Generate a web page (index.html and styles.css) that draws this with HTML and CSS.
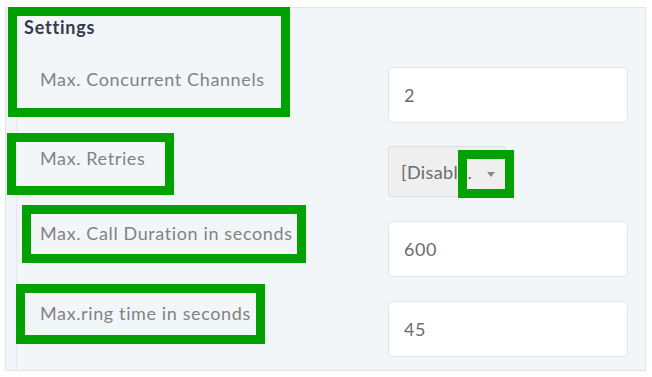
FILE: index.html
```html
<!DOCTYPE html>
<html>
<head>
<meta charset="utf-8">
<link rel="stylesheet" href="styles.css">
</head>
<body>
<div class="panel">
  <div class="section">
    <div class="heading">Settings</div>
    <div class="form">
      <div class="row r1">
        <label class="label">Max. Concurrent Channels</label>
        <div class="input">2</div>
      </div>
      <div class="row r2">
        <label class="label">Max. Retries</label>
        <div class="select"><span class="select-text">[Disabled]</span><span class="caret"></span></div>
      </div>
      <div class="row r3">
        <label class="label">Max. Call Duration in seconds</label>
        <div class="input">600</div>
      </div>
      <div class="row r4">
        <label class="label">Max.ring time in seconds</label>
        <div class="input">45</div>
      </div>
    </div>
  </div>
  <div class="mark m1"></div>
  <div class="mark m2"></div>
  <div class="mark m3"></div>
  <div class="mark m4"></div>
  <div class="mark m5"></div>
</div>
</body>
</html>
```
FILE: styles.css
```css
* { box-sizing: border-box; }
html, body { margin: 0; padding: 0; background: #ffffff; }
body { font-family: Lato, "Open Sans", sans-serif; }

.panel {
  position: relative;
  margin: 7px 0 0 5px;
  width: 641px;
  height: 364px;
  background: #f3f6f9;
  border: 1px solid #e1e5ea;
}

.section {
  margin-left: 10px;
  height: 100%;
  border-left: 1px solid #e4e8ec;
  padding-top: 9px;
}

.heading {
  font-weight: 700;
  font-size: 18px;
  letter-spacing: 0.8px;
  line-height: 20px;
  color: #363a4c;
  margin-left: 7px;
}

.form {
  margin-top: 30px;
  display: flex;
  flex-direction: column;
}

.row {
  display: grid;
  grid-template-columns: 371px 240px;
  align-items: start;
}
.r1 { height: 79px; }
.r2 { height: 75px; }
.r3 { height: 80px; }

.label {
  padding-left: 23px;
  padding-top: 1px;
  font-size: 18px;
  letter-spacing: 0.62px;
  line-height: 22px;
  color: #828282;
}

.input {
  height: 56px;
  background: #ffffff;
  border: 1px solid #e2e5e9;
  border-radius: 4px;
  padding-left: 15px;
  display: flex;
  align-items: center;
  font-size: 18px;
  letter-spacing: 0.5px;
  color: #6b6b6b;
}

.select {
  width: 118px;
  height: 51px;
  background: #efefef;
  border: 1px solid #dcdcdc;
  border-radius: 3px;
  display: flex;
  align-items: center;
  padding-left: 12px;
  font-size: 18px;
  letter-spacing: 0.4px;
  color: #6b6b6b;
  position: relative;
}
.select-text {
  white-space: nowrap;
  overflow: hidden;
  text-overflow: ellipsis;
  max-width: 72px;
}
.caret {
  position: absolute;
  left: 98px;
  top: 25px;
  width: 0;
  height: 0;
  border-left: 4.5px solid transparent;
  border-right: 4.5px solid transparent;
  border-top: 5px solid #8a8a8a;
}

.mark {
  position: absolute;
  border: 9px solid #02a102;
}
.m1 { left: 2px; top: -1px; width: 282px; height: 110px; }
.m2 { left: 1px; top: 125px; width: 167px; height: 62px; }
.m3 { left: 16px; top: 197px; width: 284px; height: 58px; }
.m4 { left: 10px; top: 276px; width: 249px; height: 60px; }
.m5 { left: 452px; top: 142px; width: 56px; height: 48px; }
```
